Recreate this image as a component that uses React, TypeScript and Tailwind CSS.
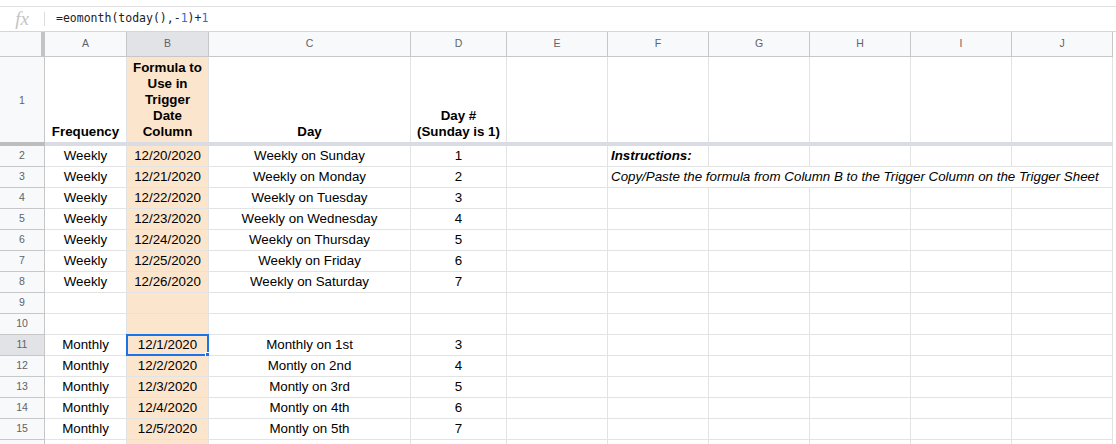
import React from "react";

const W = [
  "w-[82px]",
  "w-[82px]",
  "w-[202px]",
  "w-[96px]",
  "w-[101px]",
  "w-[101px]",
  "w-[101px]",
  "w-[101px]",
  "w-[101px]",
  "w-[101px]",
];
const LETTERS = ["A", "B", "C", "D", "E", "F", "G", "H", "I", "J"];

type Row = { n: number; cells: string[] };

const rows: Row[] = [
  { n: 2, cells: ["Weekly", "12/20/2020", "Weekly on Sunday", "1"] },
  { n: 3, cells: ["Weekly", "12/21/2020", "Weekly on Monday", "2"] },
  { n: 4, cells: ["Weekly", "12/22/2020", "Weekly on Tuesday", "3"] },
  { n: 5, cells: ["Weekly", "12/23/2020", "Weekly on Wednesday", "4"] },
  { n: 6, cells: ["Weekly", "12/24/2020", "Weekly on Thursday", "5"] },
  { n: 7, cells: ["Weekly", "12/25/2020", "Weekly on Friday", "6"] },
  { n: 8, cells: ["Weekly", "12/26/2020", "Weekly on Saturday", "7"] },
  { n: 9, cells: ["", "", "", ""] },
  { n: 10, cells: ["", "", "", ""] },
  { n: 11, cells: ["Monthly", "12/1/2020", "Monthly on 1st", "3"] },
  { n: 12, cells: ["Monthly", "12/2/2020", "Montly on 2nd", "4"] },
  { n: 13, cells: ["Monthly", "12/3/2020", "Montly on 3rd", "5"] },
  { n: 14, cells: ["Monthly", "12/4/2020", "Montly on 4th", "6"] },
  { n: 15, cells: ["Monthly", "12/5/2020", "Montly on 5th", "7"] },
  { n: 16, cells: ["", "", "", ""] },
];

function RowHeader({ n, active }: { n: number; active?: boolean }) {
  return (
    <div
      className={`w-[45px] shrink-0 h-full flex items-center justify-center border-r border-b border-[#c7c7c7] text-[10.5px] text-[#5f6368] ${
        active ? "bg-[#e1e3e6]" : "bg-[#f8f9fa]"
      }`}
    >
      {n === 16 ? "" : n}
    </div>
  );
}

function DataRow({ row }: { row: Row }) {
  return (
    <div className="flex h-[21px] shrink-0">
      <RowHeader n={row.n} active={row.n === 11} />
      {row.cells.map((c, i) => (
        <div
          key={i}
          className={`${W[i]} shrink-0 h-full flex items-center justify-center border-r border-b border-[#e2e3e3] ${
            i === 1 ? "bg-[#fce5cd]" : "bg-white"
          } relative`}
        >
          {c}
          {row.n === 11 && i === 1 && (
            <>
              <div className="absolute -left-px -top-px right-[-1px] bottom-[-1px] border-2 border-[#1a73e8]" />
              <div className="absolute right-[-4px] bottom-[-4px] w-[7px] h-[7px] bg-[#1a73e8] border border-white" />
            </>
          )}
        </div>
      ))}
      {row.n === 2 ? (
        <>
          <div className="w-[101px] shrink-0 h-full border-r border-b border-[#e2e3e3]" />
          <div className="w-[101px] shrink-0 h-full flex items-center pl-[3px] border-r border-b border-[#e2e3e3] font-bold italic whitespace-nowrap">
            Instructions:
          </div>
          {[0, 1, 2, 3].map((k) => (
            <div key={k} className="w-[101px] shrink-0 h-full border-r border-b border-[#e2e3e3]" />
          ))}
        </>
      ) : row.n === 3 ? (
        <>
          <div className="w-[101px] shrink-0 h-full border-r border-b border-[#e2e3e3]" />
          <div className="w-[505px] shrink-0 h-full flex items-center pl-[3px] border-r border-b border-[#e2e3e3] italic whitespace-nowrap">
            Copy/Paste the formula from Column B to the Trigger Column on the Trigger Sheet
          </div>
        </>
      ) : (
        [0, 1, 2, 3, 4, 5].map((k) => (
          <div key={k} className="w-[101px] shrink-0 h-full border-r border-b border-[#e2e3e3]" />
        ))
      )}
    </div>
  );
}

export default function App() {
  return (
    <div
      className="w-[1116px] h-[444px] overflow-hidden bg-white text-black text-[13.33px] flex flex-col"
      style={{ fontFamily: '"Liberation Sans", Arial, sans-serif' }}
    >
      {/* formula bar */}
      <div className="h-[6px] shrink-0 border-b border-[#e0e0e0] box-content" />
      <div className="h-[25px] shrink-0 flex items-center border-b border-[#d6d6d6]">
        <div className="w-[45px] shrink-0 flex items-center justify-center h-[14px] border-r border-[#dadce0]">
          <span
            className="italic text-[19px] text-[#c4c4c4] leading-none -mt-[2px]"
            style={{ fontFamily: '"Liberation Serif", "Times New Roman", serif' }}
          >
            fx
          </span>
        </div>
        <div
          className="pl-[11px] text-[11.5px] text-[#202124] whitespace-nowrap"
          style={{ fontFamily: '"DejaVu Sans Mono", "Liberation Mono", monospace' }}
        >
          =eomonth(today(),-<span className="text-[#2c6fd6]">1</span>)+<span className="text-[#2c6fd6]">1</span>
        </div>
      </div>

      {/* column headers */}
      <div className="h-[25px] shrink-0 flex">
        <div className="w-[45px] shrink-0 h-full bg-[#f8f9fa] border-r-[4px] border-r-[#c4c4c4] border-b border-b-[#c7c7c7]" />
        {LETTERS.map((l, i) => (
          <div
            key={l}
            className={`${W[i]} shrink-0 h-full flex items-center justify-center border-r border-b border-[#c7c7c7] text-[10.5px] text-[#5f6368] ${
              i === 1 ? "bg-[#e1e3e6]" : "bg-[#f8f9fa]"
            }`}
          >
            {l}
          </div>
        ))}
      </div>

      {/* row 1 */}
      <div className="h-[85px] shrink-0 flex font-bold leading-[16px]">
        <div className="w-[45px] shrink-0 h-full flex items-center justify-center border-r border-[#c7c7c7] bg-[#f8f9fa] text-[10.5px] font-normal text-[#5f6368]">
          1
        </div>
        <div className={`${W[0]} shrink-0 h-full flex items-end justify-center pb-[2px] border-r border-[#e2e3e3]`}>
          Frequency
        </div>
        <div className={`${W[1]} shrink-0 h-full flex items-end justify-center text-center pb-[2px] border-r border-[#e2e3e3] bg-[#fce5cd]`}>
          <div>
            Formula to
            <br />
            Use in
            <br />
            Trigger
            <br />
            Date
            <br />
            Column
          </div>
        </div>
        <div className={`${W[2]} shrink-0 h-full flex items-end justify-center pb-[2px] border-r border-[#e2e3e3]`}>
          Day
        </div>
        <div className={`${W[3]} shrink-0 h-full flex items-end justify-center text-center pb-[2px] border-r border-[#e2e3e3]`}>
          <div>
            Day #
            <br />
            (Sunday is 1)
          </div>
        </div>
        {[4, 5, 6, 7, 8, 9].map((i) => (
          <div key={i} className={`${W[i]} shrink-0 h-full border-r border-[#e2e3e3]`} />
        ))}
      </div>

      {/* frozen divider */}
      <div className="h-[4px] shrink-0 flex">
        <div className="w-[45px] shrink-0 bg-[#bdbdbd]" />
        <div className="w-[1068px] shrink-0 bg-[#d9dde3]" />
      </div>

      {rows.map((r) => (
        <DataRow key={r.n} row={r} />
      ))}
    </div>
  );
}
